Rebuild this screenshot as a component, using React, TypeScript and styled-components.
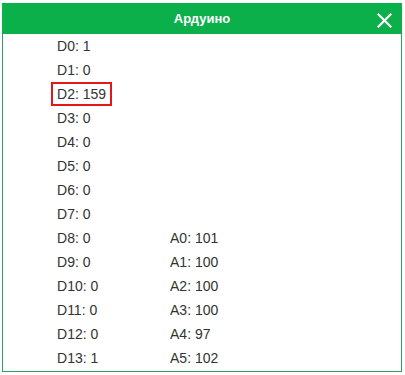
import React from "react";
import styled, { createGlobalStyle } from "styled-components";

const Global = createGlobalStyle`
  html, body { margin: 0; padding: 0; background: #fff; }
  body { font-family: "Liberation Sans", Arial, sans-serif; }
`;

const Dialog = styled.div`
  margin: 3px 0 0 2px;
  width: 400px;
  box-sizing: border-box;
  border: 1px solid #2f9e5e;
  border-top: none;
  background: #fff;
`;

const Header = styled.div`
  position: relative;
  height: 31px;
  margin: 0 -1px;
  background: #0cb04a;
  display: flex;
  align-items: center;
  justify-content: center;
  color: #fff;
  font-weight: bold;
  font-size: 13px;
`;

const Close = styled.button`
  position: absolute;
  right: 10px;
  top: 9px;
  width: 16px;
  height: 16px;
  padding: 0;
  border: none;
  background: transparent;
  display: flex;
  align-items: center;
  justify-content: center;
  cursor: pointer;
`;

const Body = styled.div`
  display: grid;
  grid-template-columns: 113px 1fr;
  grid-auto-rows: 24px;
  padding-left: 52px;
  padding-bottom: 1px;
  color: #333;
  font-size: 14px;
`;

const Cell = styled.div`
  display: flex;
  align-items: center;
`;

const Value = styled.span<{ $hl?: boolean }>`
  display: inline-block;
  line-height: 20px;
  border: 2px solid ${(p) => (p.$hl ? "#e3161b" : "transparent")};
  padding: 0 4px;
  margin-left: -4px;
`;

const digital = [1, 0, 159, 0, 0, 0, 0, 0, 0, 0, 0, 0, 0, 1];
const analog = [101, 100, 100, 100, 97, 102];

export default function App() {
  return (
    <>
      <Global />
      <Dialog>
        <Header>
          Ардуино
          <Close aria-label="close">
            <svg width="15" height="15" viewBox="0 0 15 15">
              <path d="M1.5 1.5 L13.5 13.5 M13.5 1.5 L1.5 13.5" stroke="#fff" strokeWidth="2.2" strokeLinecap="square" />
            </svg>
          </Close>
        </Header>
        <Body>
          {digital.map((v, i) => {
            const a = i - 8;
            return (
              <React.Fragment key={i}>
                <Cell>
                  <Value $hl={i === 2}>D{i}: {v}</Value>
                </Cell>
                <Cell>
                  {a >= 0 ? <Value>A{a}: {analog[a]}</Value> : null}
                </Cell>
              </React.Fragment>
            );
          })}
        </Body>
      </Dialog>
    </>
  );
}
